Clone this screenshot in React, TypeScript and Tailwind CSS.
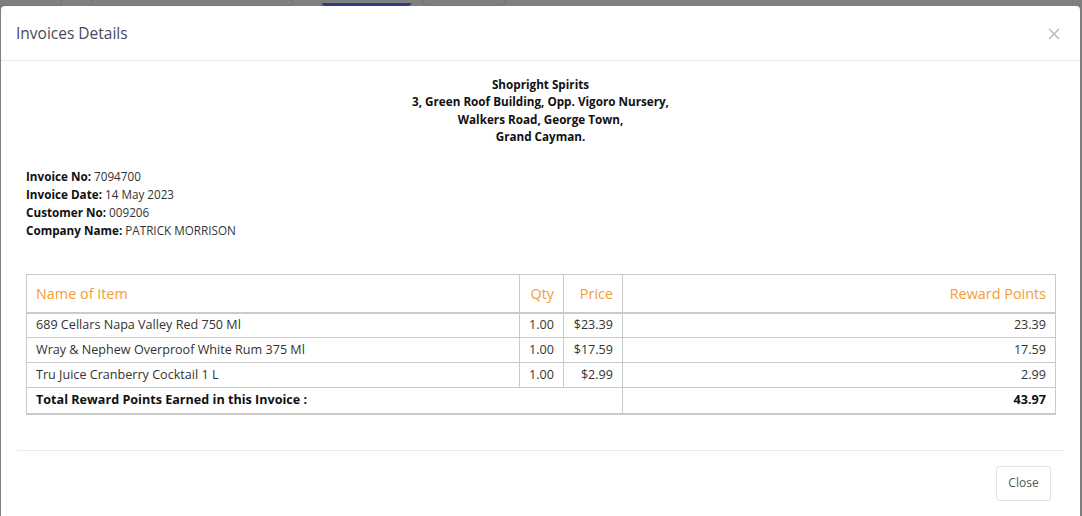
import React from "react";

const items = [
  { name: "689 Cellars Napa Valley Red 750 Ml", qty: "1.00", price: "$23.39", points: "23.39" },
  { name: "Wray & Nephew Overproof White Rum 375 Ml", qty: "1.00", price: "$17.59", points: "17.59" },
  { name: "Tru Juice Cranberry Cocktail 1 L", qty: "1.00", price: "$2.99", points: "2.99" },
];

const App = () => {
  return (
    <div className="w-[1082px] h-[516px] overflow-hidden bg-[#7f7f7f] font-['Open_Sans',sans-serif]">
      {/* page behind the overlay */}
      <div className="h-[6px] flex flex-row items-end">
        <div className="ml-0 w-[62px] h-[6px] border-b border-r border-[#737373] rounded-br" />
        <div className="ml-[29px] w-[202px] h-[6px] border-b border-x border-[#737373] rounded-b" />
        <div className="ml-[29px] w-[89px] h-[3px] bg-[#2e3a86] rounded-b" />
        <div className="ml-[12px] w-[82px] h-[6px] border-b border-x border-[#737373] rounded-b" />
      </div>
      {/* modal */}
      <div className="ml-px w-[1079px] bg-white rounded-t-[4px]">
        {/* header */}
        <div className="h-[55px] px-[15px] flex flex-row items-center justify-between border-b border-[#e9e9ef]">
          <h5 className="text-[15.5px] text-[#474a5c] mt-[1px]">Invoices Details</h5>
          <svg width="12" height="12" viewBox="0 0 12 12" className="mr-[5px] mt-[2px]">
            <path d="M1 1L11 11M11 1L1 11" stroke="#b4b4bc" strokeWidth="1.3" />
          </svg>
        </div>
        {/* body */}
        <div className="pt-[15px] pb-[35px] px-[25px]">
          <div className="text-center text-[11.7px] font-bold leading-[17.3px] text-[#111]">
            <p>Shopright Spirits</p>
            <p>3, Green Roof Building, Opp. Vigoro Nursery,</p>
            <p>Walkers Road, George Town,</p>
            <p>Grand Cayman.</p>
          </div>
          <div className="mt-[23px] text-[11.7px] leading-[17.8px] text-[#333]">
            <p><span className="font-bold text-[#111]">Invoice No:</span> 7094700</p>
            <p><span className="font-bold text-[#111]">Invoice Date:</span> 14 May 2023</p>
            <p><span className="font-bold text-[#111]">Customer No:</span> 009206</p>
            <p><span className="font-bold text-[#111]">Company Name:</span> PATRICK MORRISON</p>
          </div>
          {/* items table */}
          <table className="mt-[35px] w-[1030px] table-fixed border-collapse text-[12.6px] text-[#333]">
            <colgroup>
              <col className="w-[493px]" />
              <col className="w-[44px]" />
              <col className="w-[59px]" />
              <col />
            </colgroup>
            <thead>
              <tr className="h-[38px] text-[14.4px] text-[#f69c33]">
                <th className="border border-b-2 border-[#cacaca] text-left font-normal px-[9px]">Name of Item</th>
                <th className="border border-b-2 border-[#cacaca] text-right font-normal px-[9px]">Qty</th>
                <th className="border border-b-2 border-[#cacaca] text-right font-normal px-[9px]">Price</th>
                <th className="border border-b-2 border-[#cacaca] text-right font-normal px-[9px]">Reward Points</th>
              </tr>
            </thead>
            <tbody>
              {items.map((it) => (
                <tr key={it.name} className="h-[25px]">
                  <td className="border border-[#cacaca] px-[9px]">{it.name}</td>
                  <td className="border border-[#cacaca] px-[9px] text-right">{it.qty}</td>
                  <td className="border border-[#cacaca] px-[9px] text-right">{it.price}</td>
                  <td className="border border-[#cacaca] px-[9px] text-right">{it.points}</td>
                </tr>
              ))}
              <tr className="h-[26px] font-bold text-[#111]">
                <td colSpan={3} className="border border-b-2 border-[#cacaca] px-[9px]">
                  Total Reward Points Earned in this Invoice :
                </td>
                <td className="border border-b-2 border-[#cacaca] px-[9px] text-right">43.97</td>
              </tr>
            </tbody>
          </table>
        </div>
        {/* footer */}
        <div className="mx-[16px] border-t border-[#ebebf1] pt-[15px] pb-[20px] flex flex-row justify-end">
          <button className="w-[55px] h-[35px] mr-[13px] border border-[#e2e2ea] rounded-[3px] text-[12px] text-[#555]">
            Close
          </button>
        </div>
      </div>
    </div>
  );
};

export default App;
